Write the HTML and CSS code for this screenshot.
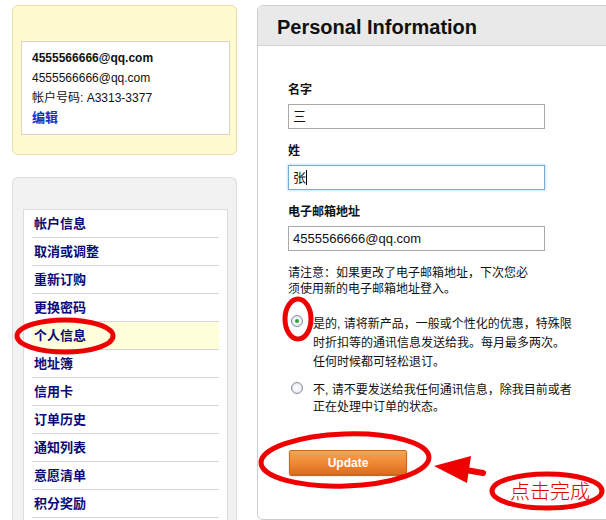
FILE: index.html
```html
<!DOCTYPE html>
<html lang="zh">
<head>
<meta charset="utf-8">
<title>Personal Information</title>
<link rel="stylesheet" href="styles.css">
</head>
<body>
<div class="page">
  <aside class="side">
    <section class="acct">
      <div class="acct-box">
        <div class="acct-name">4555566666@qq.com</div>
        <div>4555566666@qq.com</div>
        <div>帐户号码: A3313-3377</div>
        <a class="edit">编辑</a>
      </div>
    </section>
    <nav class="menu-panel">
      <div class="menu-box">
        <ul class="menu">
          <li>帐户信息</li>
          <li>取消或调整</li>
          <li>重新订购</li>
          <li>更换密码</li>
          <li class="active">个人信息</li>
          <li>地址簿</li>
          <li>信用卡</li>
          <li>订单历史</li>
          <li>通知列表</li>
          <li>意愿清单</li>
          <li>积分奖励</li>
        </ul>
      </div>
    </nav>
  </aside>
  <main class="main">
    <header class="main-head"><h1>Personal Information</h1></header>
    <div class="form">
      <div class="label">名字</div>
      <div class="field">三</div>
      <div class="label">姓</div>
      <div class="field focus">张<span class="caret"></span></div>
      <div class="label">电子邮箱地址</div>
      <div class="field latin">4555566666@qq.com</div>
      <p class="note">请注意：如果更改了电子邮箱地址，下次您必<br>须使用新的电子邮箱地址登入。</p>
      <div class="opt">
        <span class="radio checked"></span>
        <span class="opt-text">是的, 请将新产品，一般或个性化的优惠，特殊限<br>时折扣等的通讯信息发送给我。每月最多两次。<br>任何时候都可轻松退订。</span>
      </div>
      <div class="opt compact">
        <span class="radio"></span>
        <span class="opt-text">不, 请不要发送给我任何通讯信息，除我目前或者<br>正在处理中订单的状态。</span>
      </div>
      <button class="btn">Update</button>
    </div>
  </main>
</div>
<svg class="annot" width="606" height="520" viewBox="0 0 606 520">
  <g fill="none" stroke="#ee0000" stroke-width="5">
    <ellipse cx="65" cy="336" rx="48" ry="16"/>
    <ellipse cx="298" cy="319" rx="13" ry="20"/>
    <ellipse cx="345" cy="460" rx="84" ry="26" transform="rotate(-2 345 460)"/>
    <ellipse cx="547" cy="491" rx="55" ry="17"/>
    <line x1="460" y1="469" x2="483" y2="473" stroke-linecap="round" stroke-width="6"/>
  </g>
  <polygon points="434,466 471,456 467,483" fill="#ee0000"/>
</svg>
<span class="annot-text">点击完成</span>
</body>
</html>
```
FILE: styles.css
```css
html, body {
  margin: 0;
  padding: 0;
  background: #fff;
}
body {
  width: 606px;
  height: 520px;
  overflow: hidden;
  position: relative;
  font-family: "Liberation Sans", "Noto Sans CJK SC", sans-serif;
  font-size: 12px;
  color: #222;
}
.page {
  display: flex;
  gap: 20px;
  padding: 5px 0 0 12px;
}
.side {
  flex: none;
  width: 225px;
  display: flex;
  flex-direction: column;
  gap: 22px;
}
.acct {
  box-sizing: border-box;
  height: 150px;
  background: #fffacf;
  border: 1px solid #e6dfa6;
  border-radius: 6px;
  padding: 35px 6px 0 8px;
}
.acct-box {
  box-sizing: border-box;
  height: 94px;
  background: #fff;
  border: 1px solid #d6d6c8;
  padding: 6px 10px;
  line-height: 20px;
  color: #111;
}
.acct-name {
  font-weight: bold;
}
.edit {
  color: #1530c0;
  font-weight: bold;
  font-size: 13px;
}
.menu-panel {
  box-sizing: border-box;
  height: 343px;
  background: #f2f2f2;
  border: 1px solid #dddddd;
  border-bottom: none;
  border-radius: 6px 6px 0 0;
  padding: 31px 8px 0 10px;
}
.menu-box {
  box-sizing: border-box;
  background: #fff;
  border: 1px solid #dcdcdc;
  border-bottom: none;
  padding: 0 8px;
  height: 311px;
}
.menu {
  list-style: none;
  margin: 0;
  padding: 0;
}
.menu li {
  height: 27px;
  line-height: 27px;
  border-bottom: 1px solid #d6d6d6;
  padding-left: 2px;
  font-size: 13px;
  font-weight: bold;
  color: #0a0a78;
}
.menu li.active {
  background: #ffffdc;
}
.main {
  flex: none;
  width: 360px;
  background: #fff;
  border: 1px solid #cdcdcd;
  border-radius: 6px 6px 0 6px;
  overflow: hidden;
}
.main-head {
  height: 39px;
  background: #e9e9e9;
  border-bottom: 1px solid #d3d3d3;
  padding-left: 19px;
}
.main-head h1 {
  margin: 0;
  padding-top: 4px;
  line-height: 35px;
  font-size: 20px;
  font-weight: bold;
  color: #111;
}
.form {
  padding: 36px 0 27px 30px;
}
.label {
  line-height: 16px;
  font-weight: bold;
  color: #111;
  margin-bottom: 6px;
}
.field {
  box-sizing: border-box;
  width: 257px;
  height: 25px;
  line-height: 23px;
  border: 1px solid #a9a9a9;
  padding: 0 4px;
  font-size: 13px;
  color: #111;
  margin-bottom: 14px;
}
.field.focus {
  border-color: #76acd6;
  box-shadow: 0 0 2px 1px #cfe4f5;
}
.caret {
  display: inline-block;
  width: 1px;
  height: 15px;
  background: #000;
  vertical-align: -3px;
}
.note {
  margin: 0 0 18px;
  line-height: 16px;
  color: #111;
}
.opt {
  display: flex;
  gap: 10px;
  line-height: 19px;
  padding-left: 3px;
  color: #111;
}
.opt.compact {
  margin-top: 10px;
  line-height: 17px;
}
.radio {
  flex: none;
  box-sizing: border-box;
  width: 12px;
  height: 12px;
  margin-top: 0;
  border-radius: 50%;
  border: 1px solid #7f8ea0;
  background: radial-gradient(circle at 50% 50%, #ffffff 0, #f2f4f7 45%, #cfd6de 100%);
  display: flex;
  align-items: center;
  justify-content: center;
}
.radio.checked::after {
  content: "";
  width: 4px;
  height: 4px;
  border-radius: 50%;
  background: #2fa33a;
}
.btn {
  display: block;
  margin: 34px 0 0 1px;
  width: 118px;
  height: 25px;
  border: 1px solid #c9661f;
  border-radius: 2px;
  background: linear-gradient(#f7a552, #ee8632 55%, #de6d1d);
  color: #fff;
  font-family: "Liberation Sans", sans-serif;
  font-size: 12px;
  font-weight: bold;
  padding: 0;
  box-shadow: 0 1px 1px #b85a18;
}
.annot {
  position: absolute;
  left: 0;
  top: 0;
  pointer-events: none;
}
.annot-text {
  position: absolute;
  left: 510px;
  top: 480px;
  font-family: "Noto Sans CJK SC", sans-serif;
  font-size: 20px;
  font-weight: 300;
  line-height: 22px;
  color: #e00000;
}
```
